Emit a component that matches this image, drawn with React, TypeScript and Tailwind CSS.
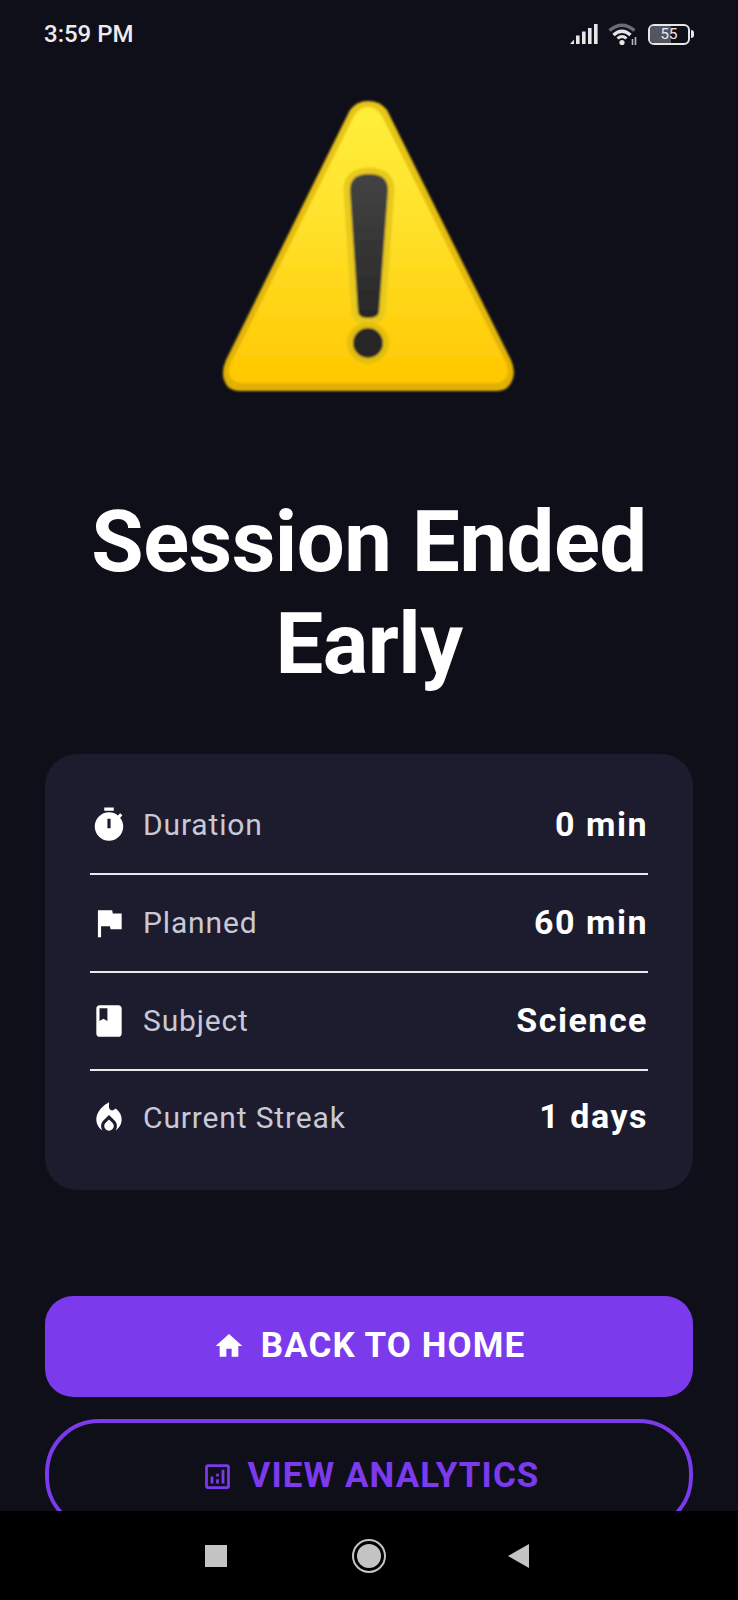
import React from "react";

const font = { fontFamily: "Roboto, sans-serif" };

function Warning() {
  return (
    <svg width="340" height="330" viewBox="0 0 340 330" className="block">
      <defs>
        <linearGradient id="fill" x1="0" y1="0" x2="0" y2="1">
          <stop offset="0" stopColor="#ffee3a" />
          <stop offset="0.4" stopColor="#ffe22d" />
          <stop offset="1" stopColor="#ffc800" />
        </linearGradient>
        <linearGradient id="edge" x1="0" y1="0" x2="0" y2="1">
          <stop offset="0" stopColor="#e8c617" />
          <stop offset="1" stopColor="#e2b004" />
        </linearGradient>
        <linearGradient id="ink" x1="0" y1="0" x2="0" y2="1">
          <stop offset="0" stopColor="#444444" />
          <stop offset="1" stopColor="#272727" />
        </linearGradient>
        <filter id="soft" x="-5%" y="-5%" width="110%" height="110%">
          <feGaussianBlur stdDeviation="0.9" />
        </filter>
      </defs>
      <g filter="url(#soft)">
        <path
          d="M150 30 Q157 21 168 21 Q180 21 187 30 L311 280 Q318 296 308 307 Q304 311 296 311 L40 311 Q33 311 28 307 Q19 296 26 280 Z"
          fill="url(#edge)"
        />
        <path
          d="M154 36 Q160 27 168 27 Q176 27 182 36 L306 283 Q311 294 304 300 Q301 303 295 303 L42 303 Q36 303 33 300 Q26 294 31 283 Z"
          fill="url(#fill)"
        />
        <path
          d="M150 110 Q150 94 169 94 Q188 94 188 110 L179 232 Q178 238 168 238 Q159 238 158 232 Z"
          fill="#e9c91a"
          stroke="#e9c91a"
          strokeWidth="13"
          strokeLinejoin="round"
        />
        <circle cx="168" cy="263" r="21" fill="#e4bf10" />
        <path
          d="M150 110 Q150 94 169 94 Q188 94 188 110 L179 232 Q178 238 168 238 Q159 238 158 232 Z"
          fill="url(#ink)"
        />
        <circle cx="168" cy="263" r="15" fill="#282828" />
      </g>
    </svg>
  );
}

function Mat({ d, size, color = "#ffffff" }: { d: string; size: number; color?: string }) {
  return (
    <svg width={size} height={size} viewBox="0 0 24 24" fill={color} className="block shrink-0">
      <path d={d} fillRule="evenodd" />
    </svg>
  );
}

const TIMER =
  "M15 1H9v2h6V1zm-4 13h2V8h-2v6zm8.03-6.61l1.42-1.42c-.43-.51-.9-.99-1.41-1.41l-1.42 1.42C16.07 4.74 14.12 4 12 4c-4.97 0-9 4.03-9 9s4.02 9 9 9 9-4.03 9-9c0-2.12-.74-4.07-1.97-5.61z";
const FLAG = "M14.4 6L14 4H5v17h2v-7h5.6l.4 2h7V6z";
const BOOK =
  "M18 2H6c-1.1 0-2 .9-2 2v16c0 1.1.9 2 2 2h12c1.1 0 2-.9 2-2V4c0-1.1-.9-2-2-2zM6 4h5v8l-2.5-1.5L6 12V4z";
const FIRE =
  "M12 12.9l-2.13 2.09C9.31 15.55 9 16.28 9 17.06 9 18.68 10.35 20 12 20s3-1.32 3-2.94c0-.78-.31-1.52-.87-2.07L12 12.9zM16 6l-.44.55C14.38 8.02 12 7.08 12 5V2S4 6 4 13c0 2.92 1.56 5.47 3.89 6.86-.56-.79-.89-1.76-.89-2.8 0-1.32.52-2.56 1.47-3.5L12 10.1l3.53 3.47c.95.93 1.47 2.17 1.47 3.5 0 1.02-.31 1.96-.85 2.75 1.89-1.15 3.29-3.06 3.71-5.3.66-3.55-1.07-6.9-3.86-8.52z";
const HOME = "M10 20v-6h4v6h5v-8h3L12 3 2 12h3v8z";
const ANALYTICS =
  "M19 3H5c-1.1 0-2 .9-2 2v14c0 1.1.9 2 2 2h14c1.1 0 2-.9 2-2V5c0-1.1-.9-2-2-2zm0 16H5V5h14v14zM7 12h2v5H7zm8-5h2v10h-2zm-4 7h2v3h-2zm0-4h2v2h-2z";

function Row({ icon, label, value, last }: { icon: string; label: string; value: string; last?: boolean }) {
  return (
    <div className={`flex items-center justify-between ${last ? "h-[97px] pb-[4px]" : "h-[98px] border-b-2 border-[#e9e9ee]"}`}>
      <div className="flex items-center gap-[15px]">
        <Mat d={icon} size={38} />
        <span className="text-[30px] leading-none tracking-[0.85px] text-[#c9c9d6]">{label}</span>
      </div>
      <span className="mb-[3px] text-[34px] font-bold leading-none tracking-[1.5px] text-white">{value}</span>
    </div>
  );
}

export default function App() {
  return (
    <div className="flex h-[1600px] w-[738px] flex-col overflow-hidden bg-[#0f0f1a]" style={font}>
      <div className="flex h-[68px] shrink-0 items-center justify-between pl-[44px] pr-[44px]">
        <span className="text-[24px] font-medium leading-none text-[#ececec]">3:59 PM</span>
        <div className="flex items-center gap-[10px]">
          <svg width="28" height="20" viewBox="0 0 28 20" fill="#e6e6e6">
            <path d="M0 20 L4 15.5 V20Z M6 11.5h3.6V20H6z M12 7.5h3.6V20H12z M18 4h3.6V20H18z M24 0h3.6V20H24z" />
          </svg>
          <svg width="30" height="24" viewBox="0 0 30 24" fill="none">
            <path d="M1.5 8.5 Q14 -2 26.5 8.5" stroke="#6c6c72" strokeWidth="3.5" />
            <path d="M5.5 13 Q14 5.5 22.5 13" stroke="#e6e6e6" strokeWidth="3.5" />
            <path d="M9.5 16.5 Q14 12.5 18.5 16.5" stroke="#e6e6e6" strokeWidth="3" />
            <circle cx="14" cy="20.5" r="2.6" fill="#e6e6e6" />
            <path d="M24.5 17v6M27.5 15v8" stroke="#b8b8b8" strokeWidth="1.6" />
          </svg>
          <div className="flex items-center gap-[1px]">
            <div className="relative flex h-[21px] w-[42px] items-center justify-center overflow-hidden rounded-[6px] border-[2.5px] border-[#e6e6e6]">
              <div className="absolute inset-y-0 left-0 w-[55%] bg-[#55555f]" />
              <span className="relative text-[15px] leading-none text-[#ececec]">55</span>
            </div>
            <div className="h-[8px] w-[3px] rounded-r-sm bg-[#e6e6e6]" />
          </div>
        </div>
      </div>

      <div className="flex min-h-0 flex-1 flex-col items-center overflow-hidden px-[45px]">
        <div className="ml-[2px] mt-[12px]">
          <Warning />
        </div>
        <h1 className="mt-[81px] text-center text-[85px] font-bold leading-[102px] tracking-[-0.5px] text-white">
          Session Ended
          <br />
          Early
        </h1>
        <div className="mt-[59px] w-full shrink-0 rounded-[32px] bg-[#1c1c2e] px-[45px] pb-[22px] pt-[23px]">
          <Row icon={TIMER} label="Duration" value="0 min" />
          <Row icon={FLAG} label="Planned" value="60 min" />
          <Row icon={BOOK} label="Subject" value="Science" />
          <Row icon={FIRE} label="Current Streak" value="1 days" last />
        </div>
        <button className="mt-[106px] flex h-[101px] w-full shrink-0 items-center justify-center gap-[16px] rounded-[28px] bg-[#7c3aed] pb-[1px] text-[35px] font-bold tracking-[1.05px] text-white">
          <Mat d={HOME} size={32} />
          BACK TO HOME
        </button>
        <button className="mt-[22px] flex h-[112px] w-full shrink-0 items-center justify-center gap-[14px] rounded-[54px] border-[4px] border-[#7c3aed] pl-[2px] pt-[2px] text-[35px] font-bold tracking-[1.08px] text-[#7c3aed]">
          <Mat d={ANALYTICS} size={33} color="#7c3aed" />
          VIEW ANALYTICS
        </button>
      </div>

      <div className="flex h-[89px] shrink-0 items-center bg-black">
        <div className="ml-[205px] h-[22px] w-[22px] bg-[#c4c4c4]" />
        <div className="ml-[125px] flex h-[34px] w-[34px] items-center justify-center rounded-full border-2 border-[#c4c4c4]">
          <div className="h-[24px] w-[24px] rounded-full bg-[#c4c4c4]" />
        </div>
        <svg width="22" height="24" viewBox="0 0 22 24" className="ml-[122px]">
          <path d="M0 12 L21 0 V24 Z" fill="#c4c4c4" />
        </svg>
      </div>
    </div>
  );
}
